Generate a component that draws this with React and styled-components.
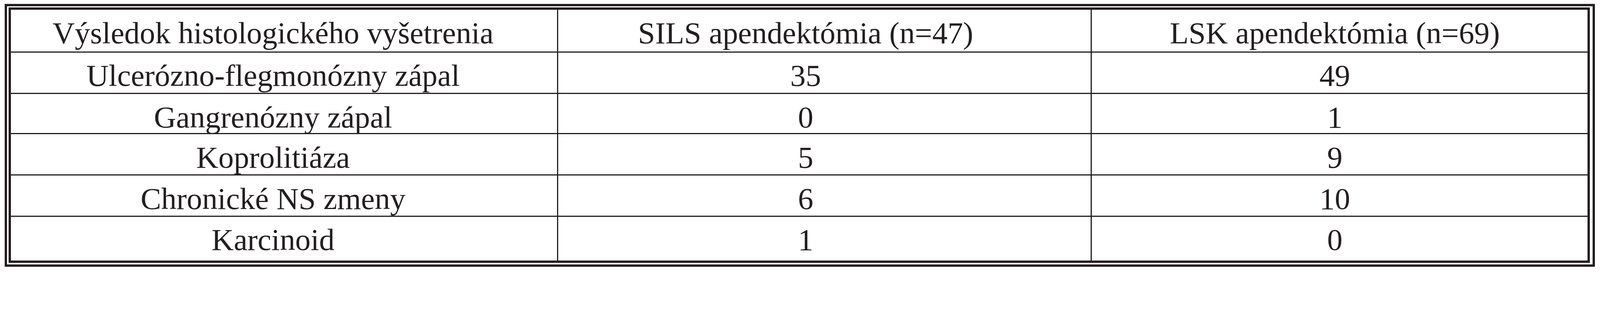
import React from "react";
import styled, { createGlobalStyle } from "styled-components";

/* All sizes are given in reference-image pixels and converted to a share of
   the viewport width, so the table fills the 4679px-wide frame exactly. */
const v = (n) => `calc(${n} * 100vw / 4679)`;

const INK = "#231f20";

const Global = createGlobalStyle`
  html, body {
    margin: 0;
    padding: 0;
    background: #ffffff;
    overflow: hidden;
  }
  body {
    font-family: "Liberation Serif", "Times New Roman", serif;
    color: ${INK};
  }
`;

const Frame = styled.div`
  box-sizing: border-box;
  width: ${v(4650)};
  margin: ${v(11)} 0 0 ${v(14)};
  border: ${v(7)} solid ${INK};
  padding: ${v(4)} ${v(8)} ${v(5)} ${v(4)};
  background: #ffffff;
`;

const Grid = styled.div`
  box-sizing: border-box;
  border: ${v(7)} solid ${INK};
  display: grid;
  grid-template-columns: ${v(1601)} ${v(1560)} 1fr;
`;

const Cell = styled.div`
  box-sizing: border-box;
  height: ${(p) => v(p.$h)};
  padding-top: ${v(17)};
  text-align: center;
  white-space: nowrap;
  overflow: hidden;
  font-family: "Liberation Serif", "Times New Roman", serif;
  font-size: ${v(90)};
  line-height: normal;
  font-weight: 400;
  color: ${INK};
  border-bottom: ${(p) => (p.$last ? "none" : `${v(4)} solid ${INK}`)};
  border-right: ${v(4)} solid ${INK};

  &:nth-child(3n + 1) {
    padding-right: ${v(64)};
  }
  &:nth-child(3n + 2) {
    padding-right: ${v(110)};
  }
  &:nth-child(3n) {
    padding-right: ${v(28)};
    border-right: none;
  }
`;

const rows = [
  {
    h: 125,
    cells: [
      "Výsledok histologického vyšetrenia",
      "SILS apendektómia (n=47)",
      "LSK apendektómia (n=69)",
    ],
  },
  { h: 122, cells: ["Ulcerózno-flegmonózny zápal", "35", "49"] },
  { h: 117, cells: ["Gangrenózny zápal", "0", "1"] },
  { h: 121, cells: ["Koprolitiáza", "5", "9"] },
  { h: 121, cells: ["Chronické NS zmeny", "6", "10"] },
  { h: 128, cells: ["Karcinoid", "1", "0"] },
];

export default function App() {
  return (
    <>
      <Global />
      <Frame>
        <Grid>
          {rows.map((r, i) =>
            r.cells.map((c, j) => (
              <Cell key={`${i}-${j}`} $h={r.h} $last={i === rows.length - 1}>
                {c}
              </Cell>
            ))
          )}
        </Grid>
      </Frame>
    </>
  );
}
